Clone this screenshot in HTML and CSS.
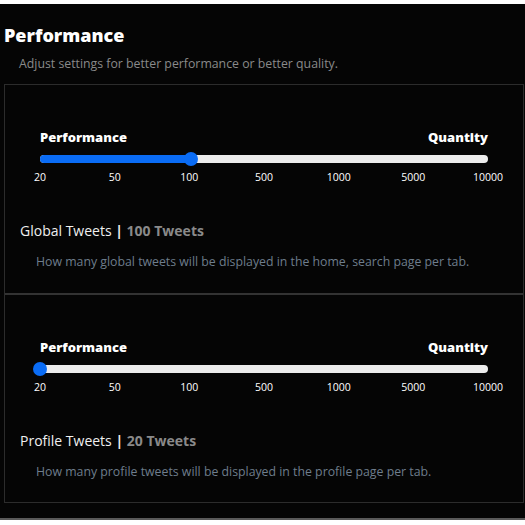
FILE: index.html
```html
<!DOCTYPE html>
<html lang="en">
<head>
  <meta charset="UTF-8" />
  <title>Performance settings</title>
  <link rel="stylesheet" href="styles.css">
</head>
<body>
  <div class="settings">
    <h1 class="settings-title">Performance</h1>
    <div class="settings-sub">Adjust settings for better performance or better quality.</div>

    <div class="card">
      <div class="option">
        <div class="slider-labels">
          <span>Performance</span>
          <span>Quantity</span>
        </div>
        <div class="track">
          <div class="fill" style="width: 33.8%"></div>
          <div class="thumb" style="left: 33.8%"></div>
        </div>
        <div class="ticks">
          <span>20</span><span>50</span><span>100</span><span>500</span><span>1000</span><span>5000</span><span>10000</span>
        </div>
        <div class="option-title">Global Tweets <b>|</b> <span class="value">100 Tweets</span></div>
        <div class="option-desc">How many global tweets will be displayed in the home, search page per tab.</div>
      </div>

      <div class="option">
        <div class="slider-labels">
          <span>Performance</span>
          <span>Quantity</span>
        </div>
        <div class="track">
          <div class="fill" style="width: 0%"></div>
          <div class="thumb" style="left: 0%"></div>
        </div>
        <div class="ticks">
          <span>20</span><span>50</span><span>100</span><span>500</span><span>1000</span><span>5000</span><span>10000</span>
        </div>
        <div class="option-title">Profile Tweets <b>|</b> <span class="value">20 Tweets</span></div>
        <div class="option-desc">How many profile tweets will be displayed in the profile page per tab.</div>
      </div>
    </div>
  </div>
</body>
</html>
```

FILE: styles.css
```css
body { margin: 0; background: #fff; font-family: "Open Sans", "Noto Sans", sans-serif; }
.settings {
  margin-top: 4px;
  height: 514px;
  background: #050505;
  border-bottom: 2px solid #5a5a5a;
  color: #fff;
  overflow: hidden;
}
.settings-title {
  margin: 0;
  padding: 19px 0 0 4px;
  font-size: 18px;
  line-height: 24px;
  font-weight: 800;
}
.settings-sub {
  padding: 8px 0 0 19px;
  font-size: 12.3px;
  line-height: 18px;
  color: #8a8a8a;
}
.card {
  margin: 11px 1px 0 4px;
  border: 1px solid #2c2c2c;
}
.option {
  height: 208px;
  padding: 44px 35px 0 35px;
  box-sizing: border-box;
}
.option + .option {
  height: 209px;
  border-top: 2px solid #333;
}
.slider-labels {
  display: flex;
  justify-content: space-between;
  font-size: 13px;
  line-height: 16px;
  font-weight: 800;
}
.track {
  position: relative;
  margin-top: 10px;
  height: 8px;
  background: #ececec;
  border-radius: 4px;
}
.fill {
  height: 100%;
  background: #0a6cf5;
  border-radius: 4px;
}
.thumb {
  position: absolute;
  top: -3px;
  width: 14px;
  height: 14px;
  margin-left: -7px;
  border-radius: 50%;
  background: #0a6cf5;
}
.ticks {
  display: flex;
  justify-content: space-between;
  margin-top: 7px;
  font-size: 10.5px;
  line-height: 14px;
}
.ticks span {
  width: 0;
  display: flex;
  justify-content: center;
  white-space: nowrap;
}
.option-title {
  margin: 37px 0 0 -20px;
  font-size: 14px;
  line-height: 20px;
  color: #f0f0f0;
}
.option-title .value {
  font-weight: 700;
  color: #8a8a8a;
}
.option-desc {
  margin: 12px 0 0 -4px;
  font-size: 12.3px;
  line-height: 18px;
  color: #6e7d8c;
}
```
